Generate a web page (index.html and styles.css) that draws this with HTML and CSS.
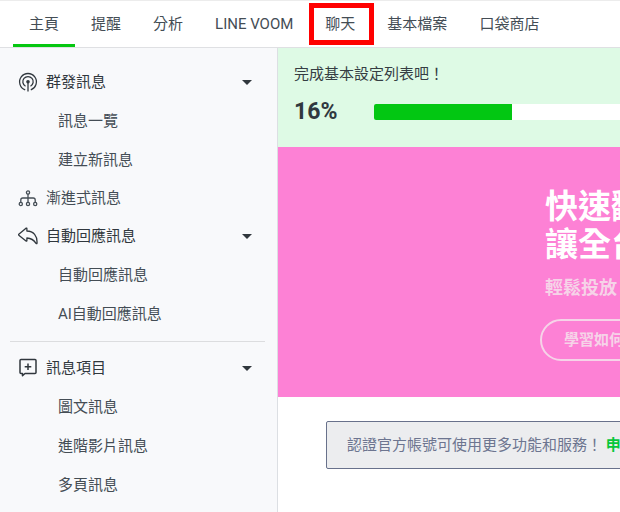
FILE: index.html
```html
<!DOCTYPE html>
<html lang="zh-Hant">
<head>
<meta charset="utf-8">
<meta name="viewport" content="width=device-width, initial-scale=1">
<title>主頁</title>
<link rel="stylesheet" href="styles.css">
</head>
<body>
<header class="topbar">
  <nav class="tabs">
    <a class="tab tab-active" href="#">主頁</a>
    <a class="tab" href="#">提醒</a>
    <a class="tab" href="#">分析</a>
    <a class="tab" href="#">LINE VOOM</a>
    <a class="tab tab-marked" href="#">聊天</a>
    <a class="tab" href="#">基本檔案</a>
    <a class="tab" href="#">口袋商店</a>
  </nav>
</header>
<div class="layout">
  <nav class="sidebar">
    <div class="section">
      <button class="group" type="button">
        <svg class="icon icon-thin" viewBox="0 0 20 20"><path d="M7.200 17.800A8.400 8.400 0 1 1 12.800 17.800M7.500 14.300A5.200 5.200 0 1 1 12.500 14.300M10 10v9.500"/><circle class="solid" cx="10" cy="9.800" r="1.800"/></svg>
        <span>群發訊息</span><svg class="caret" viewBox="0 0 10 5"><path d="M0 0h10L5 5z"/></svg>
      </button>
      <a class="item" href="#">訊息一覽</a>
      <a class="item" href="#">建立新訊息</a>
      <a class="group group-link" href="#">
        <svg class="icon icon-thin" viewBox="0 0 20 20"><path d="M10 6v8.500M2.800 14.500V12q0-2 2-2h10.400q2 0 2 2v2.500"/><circle cx="10" cy="4.500" r="1.600"/><circle cx="2.800" cy="16" r="1.600"/><circle cx="10" cy="16" r="1.600"/><circle cx="17.200" cy="16" r="1.600"/></svg>
        <span>漸進式訊息</span>
      </a>
      <button class="group" type="button">
        <svg class="icon icon-thin" viewBox="0 0 20 20"><path d="M.8 8.200 8 2.200q.9-.4.9.6V5C15.500 5 19.500 10 19 17.200q-.3.9-1 .1C15.800 13.800 13 12.200 8.900 12v2.500q0 1-.9.5L.8 9.200q-.4-.5 0-1z"/></svg>
        <span>自動回應訊息</span><svg class="caret" viewBox="0 0 10 5"><path d="M0 0h10L5 5z"/></svg>
      </button>
      <a class="item" href="#">自動回應訊息</a>
      <a class="item" href="#">AI自動回應訊息</a>
    </div>
    <div class="section">
      <button class="group" type="button">
        <svg class="icon" viewBox="0 0 20 20"><path d="M3 1.500h14q1 0 1 1v12q0 1-1 1H7L4.500 17.700v-2.200H3q-1 0-1-1v-12q0-1 1-1zM10 5.500v6.600M6.700 8.800h6.600"/></svg>
        <span>訊息項目</span><svg class="caret" viewBox="0 0 10 5"><path d="M0 0h10L5 5z"/></svg>
      </button>
      <a class="item" href="#">圖文訊息</a>
      <a class="item" href="#">進階影片訊息</a>
      <a class="item" href="#">多頁訊息</a>
    </div>
  </nav>
  <main class="content">
    <section class="setup">
      <p class="setup-title" id="setup-title">完成基本設定列表吧！</p>
      <div class="setup-row">
        <strong class="percent">16%</strong>
        <div class="track" role="progressbar" aria-labelledby="setup-title" aria-valuenow="16" aria-valuemin="0" aria-valuemax="100">
          <div class="fill" style="width: 16%"></div>
        </div>
      </div>
    </section>
    <section class="banner">
      <h1 class="banner-title">快速翻<br>讓全台</h1>
      <p class="banner-text">輕鬆投放</p>
      <a class="banner-button" href="#">學習如何</a>
    </section>
    <section class="notice">
      <span>認證官方帳號可使用更多功能和服務！</span>
      <a class="apply" href="#">申</a>
    </section>
  </main>
</div>
</body>
</html>
```
FILE: styles.css
```css
* {
  box-sizing: border-box;
}

body {
  margin: 0;
  min-height: 100vh;
  display: flex;
  flex-direction: column;
  overflow: hidden;
  background: #fff;
  color: #444d55;
  font: 15px/24px Roboto, "Noto Sans CJK TC", sans-serif;
}

a {
  color: inherit;
  text-decoration: none;
}

h1,
p {
  margin: 0;
}

.topbar {
  height: 48px;
  border-top: 1px solid #ececec;
  border-bottom: 1px solid #dfe0e3;
}

.tabs {
  display: flex;
  height: 100%;
  padding-left: 13px;
}

.tab {
  display: flex;
  align-items: center;
  padding: 3px 16px 0;
  border-bottom: 3px solid transparent;
  white-space: nowrap;
}

.tab-active {
  border-color: #06c711;
}

.tab-marked {
  position: relative;
}

.tab-marked::after {
  content: "";
  position: absolute;
  top: 2px;
  right: -3px;
  bottom: -1px;
  left: 0;
  border: 5px solid #f00;
}

.layout {
  flex: 1;
  display: flex;
}

.sidebar {
  flex: 0 0 278px;
  padding: 7px 12px 0 10px;
  border-right: 1px solid #dcdfe3;
  background: #f8f9fb;
}

.section {
  padding: 8px 0;
}

.section + .section {
  padding-top: 7px;
  border-top: 1px solid #dcdddf;
}

.group {
  display: flex;
  align-items: center;
  gap: 8px;
  width: 100%;
  height: 38px;
  padding: 0 13px 0 8px;
  border: 0;
  background: none;
  color: #30373d;
  font: inherit;
}

.group-link {
  color: #444d55;
}

.icon {
  width: 20px;
  height: 20px;
  fill: none;
  stroke: currentColor;
  stroke-width: 1.5;
  stroke-linejoin: round;
}

.icon-thin {
  stroke-width: 1.3;
}

.solid {
  fill: currentColor;
  stroke: none;
}

.caret {
  width: 10px;
  height: 5px;
  margin-left: auto;
  fill: #30373d;
}

.item {
  display: flex;
  align-items: center;
  height: 39px;
  padding-left: 48px;
}

.content {
  flex: 1 0 975px;
}

.setup {
  padding: 14px 16px 21px;
  background: #defae5;
}

.setup-title {
  color: #353d43;
}

.setup-row {
  display: flex;
  align-items: center;
  margin-top: 12px;
}

.percent {
  width: 80px;
  color: #30383f;
  font-size: 23px;
  line-height: 28px;
}

.track {
  flex: 1;
  height: 16px;
  border-radius: 2px;
  overflow: hidden;
  background: #fff;
}

.fill {
  height: 100%;
  background: #02c712;
}

.banner {
  padding: 41px 16px 36px 262px;
  background: #fd81d5;
}

.banner-title {
  padding-left: 5px;
  color: #fff;
  font-size: 33px;
  line-height: 38px;
}

.banner-text {
  margin-top: 11px;
  padding-left: 5px;
  color: #f6d3e8;
  font-size: 18px;
  font-weight: 600;
  line-height: 26px;
}

.banner-button {
  display: inline-block;
  margin-top: 18px;
  padding: 7px 22px;
  border: 2px solid #f6d3e8;
  border-radius: 21px;
  color: #f6d3e8;
  font-size: 15px;
  font-weight: 600;
  vertical-align: top;
}

.notice {
  margin: 24px 48px;
  padding: 11px 20px;
  border: 1px solid #68718b;
  border-radius: 2px;
  background: #ecedef;
  color: #6d7590;
  white-space: nowrap;
}

.apply {
  color: #06c73c;
  font-weight: 700;
}
```
